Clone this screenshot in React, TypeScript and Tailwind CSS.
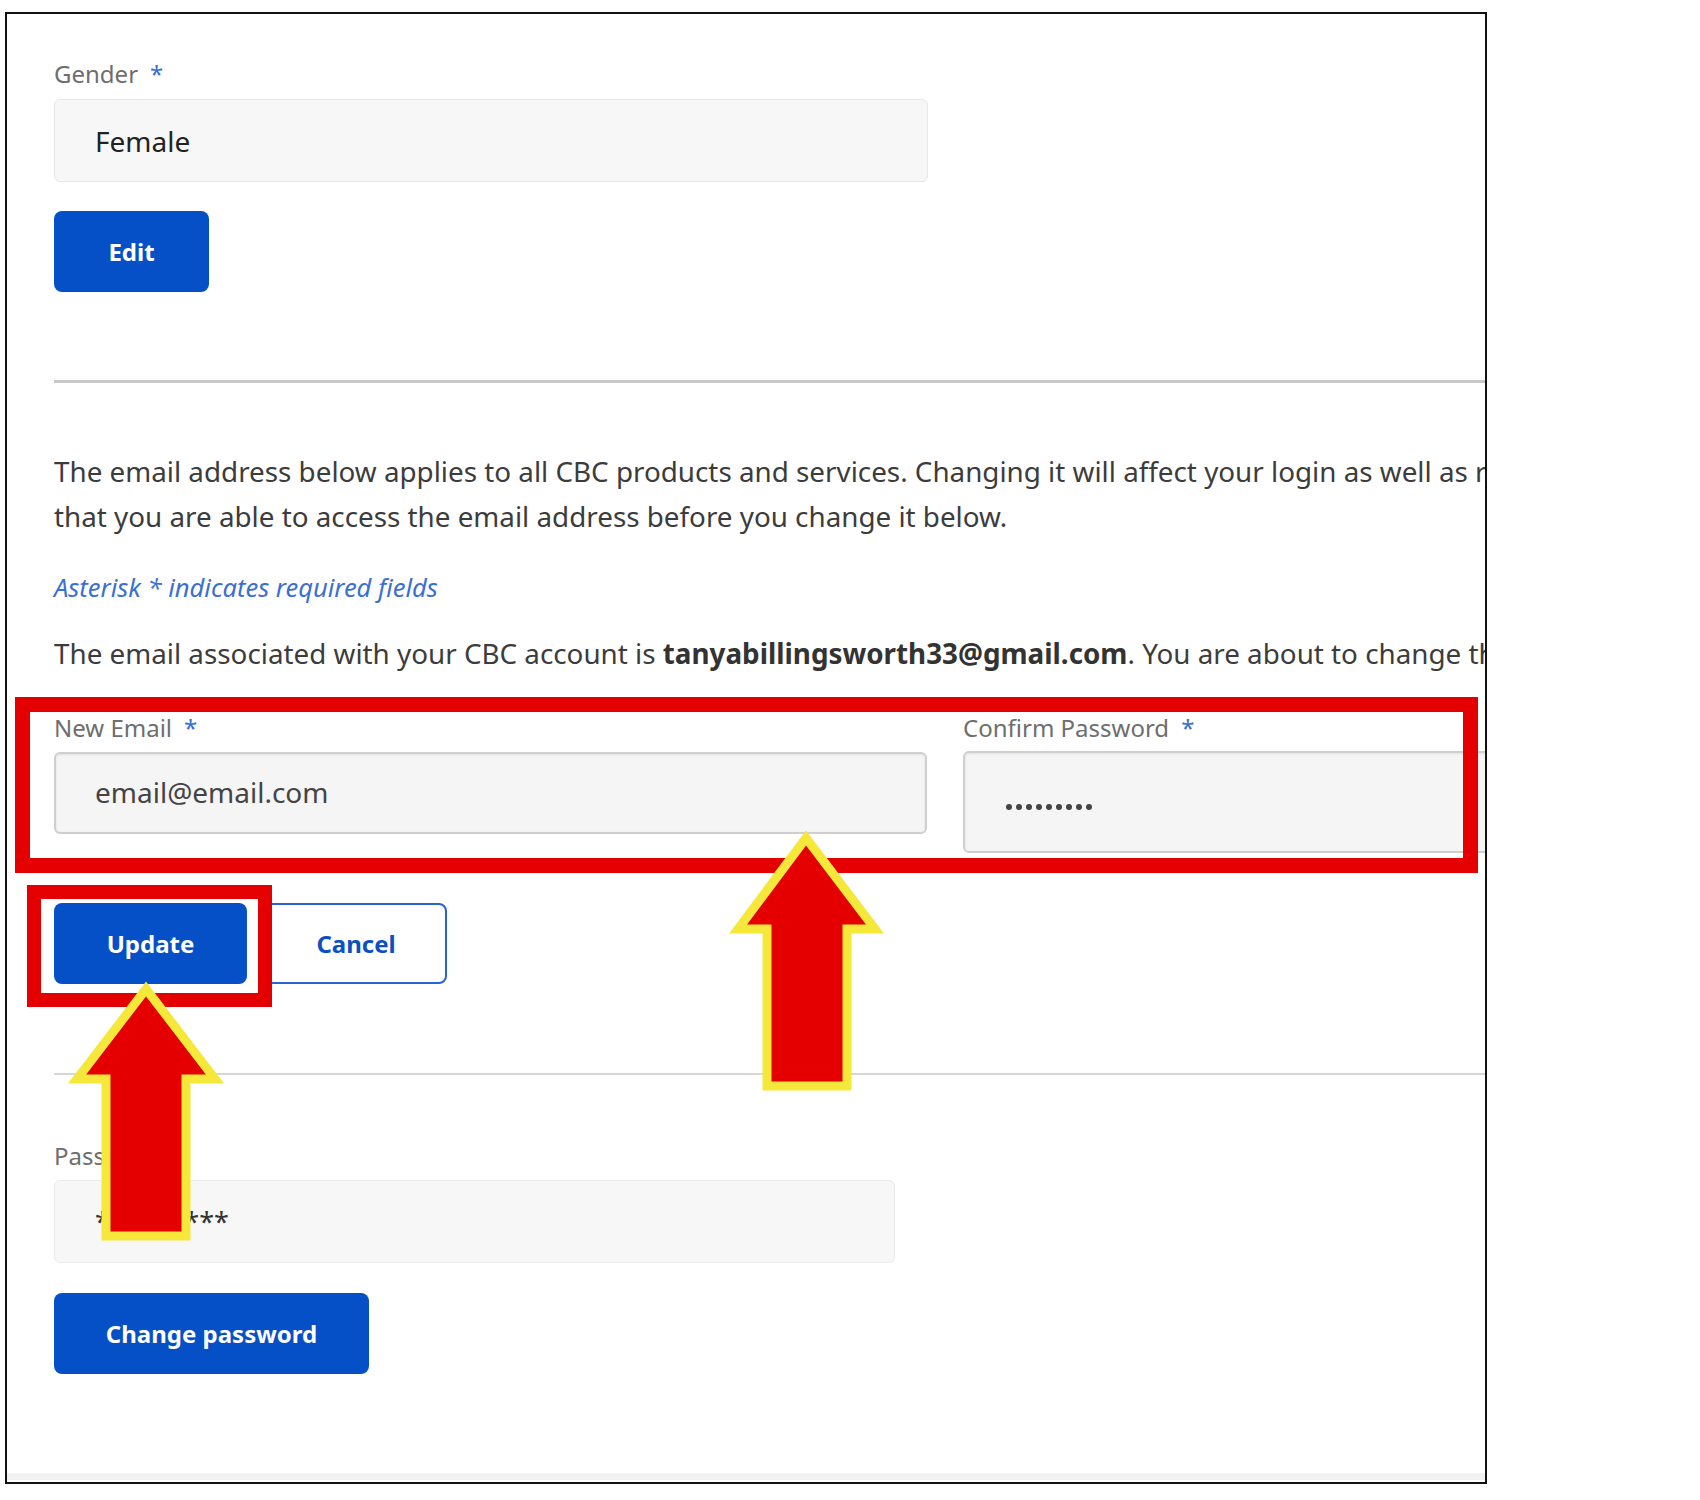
// App.tsx — CBC account email change form with annotation overlays

const Star = () => <span className="ml-3 text-[#3a6ed6]">*</span>;

const labelCls = "text-[24px] leading-[24px] text-[#6e6e6e]";

const PasswordDots = ({ count }: { count: number }) => (
  <div className="flex gap-[4px]">
    {Array.from({ length: count }).map((_, i) => (
      <span key={i} className="h-[6px] w-[6px] rounded-full bg-[#444]" />
    ))}
  </div>
);

function Annotations() {
  return (
    <>
      {/* red highlight boxes */}
      <div className="absolute left-[15px] top-[697px] h-[176px] w-[1463px] border-[15px] border-[#e40000]" />
      <div className="absolute left-[27px] top-[885px] h-[122px] w-[245px] border-[14px] border-[#e40000]" />
      {/* arrows */}
      <svg className="pointer-events-none absolute left-0 top-0" width="1700" height="1500" viewBox="0 0 1700 1500">
        <polygon
          points="806,838 738,929 767,929 767,1086 847,1086 847,929 875,929"
          fill="#e40000"
          stroke="#f6e83a"
          strokeWidth="9"
          strokeLinejoin="miter"
          strokeMiterlimit="10"
        />
        <polygon
          points="146,989 77,1079 106,1079 106,1236 186,1236 186,1079 215,1079"
          fill="#e40000"
          stroke="#f6e83a"
          strokeWidth="9"
          strokeLinejoin="miter"
          strokeMiterlimit="10"
        />
      </svg>
    </>
  );
}

export default function App() {
  return (
    <div className="relative h-[1500px] w-[1700px] bg-white pl-[5px] pt-[12px] font-['Noto_Sans',sans-serif]">
      <div className="flex h-[1472px] w-[1482px] flex-col overflow-hidden border-2 border-[#111]">
        <div className="w-[1700px] shrink-0 pl-[47px] pt-[48px]">
          {/* Gender */}
          <div className={labelCls}>
            Gender
            <Star />
          </div>
          <div className="mt-[13px] flex h-[83px] w-[874px] items-center rounded-[6px] border border-[#e8e8e8] bg-[#f7f7f7] pl-[40px] text-[28px] leading-[28px] text-[#222]">
            Female
          </div>
          <button className="mt-[29px] flex h-[81px] w-[155px] items-center justify-center rounded-[8px] bg-[#0650c7] text-[24px] font-bold text-white">
            Edit
          </button>

          <div className="mt-[88px] h-[3px] w-full bg-[#c8c8c8]" />

          {/* Email section */}
          <div className="mt-[66px] whitespace-nowrap text-[27.8px] leading-[45px] text-[#3c3c3c]">
            <div>
              The email address below applies to all CBC products and services. Changing it will affect your login as well as
              receiving newsletters. Please make sure
            </div>
            <div>that you are able to access the email address before you change it below.</div>
          </div>

          <div className="mt-[36px] text-[25.5px] italic leading-[24px] text-[#3b6fd1]">
            Asterisk * indicates required fields
          </div>

          <div className="mt-[32px] whitespace-nowrap text-[27.8px] leading-[45px] text-[#3c3c3c]">
            The email associated with your CBC account is{" "}
            <span className="font-bold text-[#333]">tanyabillingsworth33@gmail.com</span>. You are about to change this email
            address.
          </div>

          <div className="mt-[40px] flex items-start gap-[36px]">
            <div className="w-[873px]">
              <div className={labelCls}>
                New Email
                <Star />
              </div>
              <div className="mt-[12px] flex h-[82px] items-center rounded-[6px] border-2 border-[#cfcfcf] bg-[#f5f5f5] pb-[3px] pl-[39px] text-[28px] leading-[28px] text-[#444] shadow-[inset_0_1px_3px_rgba(0,0,0,0.08)]">
                email@email.com
              </div>
            </div>
            <div className="w-[640px]">
              <div className={labelCls}>
                Confirm Password
                <Star />
              </div>
              <div className="mt-[11px] flex h-[102px] items-center rounded-[6px] border-2 border-[#cfcfcf] bg-[#f5f5f5] pl-[41px] pt-[10px] shadow-[inset_0_1px_3px_rgba(0,0,0,0.08)]">
                <PasswordDots count={9} />
              </div>
            </div>
          </div>

          <div className="mt-[50px] flex gap-[18px]">
            <button className="flex h-[81px] w-[193px] items-center justify-center rounded-[8px] bg-[#0650c7] text-[24px] font-bold text-white">
              Update
            </button>
            <button className="flex h-[81px] w-[182px] items-center justify-center rounded-[8px] border-2 border-[#2a62cf] bg-white text-[24px] font-bold text-[#0a4fc4]">
              Cancel
            </button>
          </div>

          <div className="mt-[89px] h-[2px] w-full bg-[#d6d6d6]" />

          {/* Password */}
          <div className={`mt-[69px] ${labelCls}`}>Password</div>
          <div className="mt-[12px] flex h-[83px] w-[841px] items-center rounded-[6px] border border-[#ebebeb] bg-[#f7f7f7] pl-[40px] text-[27px] leading-[28px] text-[#333]">
            *********
          </div>
          <button className="mt-[30px] flex h-[81px] w-[315px] items-center justify-center rounded-[8px] bg-[#0650c7] text-[24px] font-bold text-white">
            Change password
          </button>
        </div>
        <div className="mb-[2px] mt-auto h-[7px] w-full shrink-0 bg-[#f1f1f1]" />
      </div>
      <Annotations />
    </div>
  );
}
